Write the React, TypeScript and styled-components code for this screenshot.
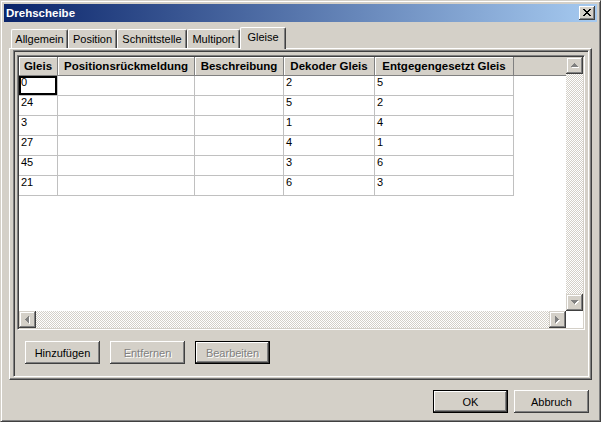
import styled, { createGlobalStyle } from "styled-components";

const GlobalStyle = createGlobalStyle`
  html, body {
    margin: 0;
    padding: 0;
    background: #d4d0c8;
  }
  body {
    font-family: "Liberation Sans", Arial, sans-serif;
    font-size: 11px;
    color: #000;
  }
  * {
    box-sizing: border-box;
  }
`;

const Window = styled.div`
  width: 601px;
  height: 422px;
  display: flex;
  flex-direction: column;
  padding: 3px;
  background: #d4d0c8;
  border: 1px solid;
  border-color: #d4d0c8 #404040 #404040 #d4d0c8;
  box-shadow: inset 1px 1px #fff, inset -1px -1px #808080;
`;

const TitleBar = styled.div`
  height: 18px;
  flex-shrink: 0;
  display: flex;
  align-items: center;
  justify-content: space-between;
  padding: 0 2px;
  background: linear-gradient(to right, #0a246a, #a6caf0);
  color: #fff;
  font-weight: bold;
  font-size: 11.5px;
`;

const CloseButton = styled.div`
  width: 16px;
  height: 14px;
  display: flex;
  align-items: center;
  justify-content: center;
  padding: 0 1px 1px 0;
  background: #d4d0c8;
  box-shadow: inset -1px -1px #404040, inset 1px 1px #fff,
    inset -2px -2px #808080, inset 2px 2px #d4d0c8;
`;

const Body = styled.div`
  flex: 1;
  display: flex;
  flex-direction: column;
  padding: 5px;
`;

const TabStrip = styled.div`
  height: 21px;
  display: flex;
  align-items: flex-end;
  padding-left: 2px;
  position: relative;
  z-index: 1;
`;

const Tab = styled.div<{ $w: number; $active?: boolean }>`
  width: ${(p) => p.$w}px;
  height: ${(p) => (p.$active ? 22 : 19)}px;
  margin-bottom: ${(p) => (p.$active ? -1 : 0)}px;
  padding-top: ${(p) => (p.$active ? 1 : 0)}px;
  line-height: ${(p) => (p.$active ? 16 : 18)}px;
  text-align: center;
  white-space: nowrap;
  background: #d4d0c8;
  border-top: 1px solid #fff;
  border-left: 1px solid #fff;
  border-right: 1px solid #404040;
  border-radius: 2px 2px 0 0;
  box-shadow: inset -1px 0 #808080;
`;

const Sheet = styled.div`
  height: 332px;
  flex-shrink: 0;
  display: flex;
  padding: 1px 2px 2px 3px;
  border: 1px solid;
  border-color: #fff #404040 #404040 #fff;
  box-shadow: inset -1px -1px #808080;
`;

const Frame = styled.div`
  flex: 1;
  display: flex;
  flex-direction: column;
  padding: 4px 3px 0 3px;
  border: 1px solid;
  border-color: #808080 #fff #fff #808080;
  box-shadow: inset 1px 1px #404040;
`;

const GridBox = styled.div`
  height: 275px;
  padding: 1px;
  border: 1px solid;
  border-color: #808080 #fff #fff #808080;
  box-shadow: inset 1px 1px #404040, inset -1px -1px #d4d0c8;
`;

const GridInner = styled.div`
  height: 100%;
  display: grid;
  grid-template-columns: 1fr 17px;
  grid-template-rows: 1fr 17px;
  background: #fff;
`;

const TableArea = styled.div`
  overflow: hidden;
  background: #fff;
`;

const HeaderRow = styled.div`
  display: flex;
  height: 19px;
`;

const HeaderCell = styled.div<{ $w: number }>`
  width: ${(p) => p.$w}px;
  flex-shrink: 0;
  line-height: 18px;
  font-weight: bold;
  font-size: 11.5px;
  text-align: center;
  white-space: nowrap;
  overflow: hidden;
  background: #d4d0c8;
  border-right: 1px solid #808080;
  border-bottom: 1px solid #808080;
  box-shadow: inset 1px 1px #fff;
`;

const HeaderFill = styled.div`
  flex: 1;
  background: #d4d0c8;
  border-bottom: 1px solid #808080;
`;

const DataRow = styled.div`
  display: flex;
  height: 20px;
`;

const Cell = styled.div<{ $w: number; $focus?: boolean }>`
  width: ${(p) => p.$w}px;
  flex-shrink: 0;
  padding: 0 2px;
  line-height: 12px;
  white-space: nowrap;
  border-right: 1px solid #c0c0c0;
  border-bottom: 1px solid #c0c0c0;
  box-shadow: ${(p) => (p.$focus ? "inset 0 0 0 2px #000" : "none")};
`;

const ScrollBar = styled.div<{ $vertical?: boolean }>`
  display: flex;
  flex-direction: ${(p) => (p.$vertical ? "column" : "row")};
`;

const Track = styled.div`
  flex: 1;
  background-color: #fff;
  background-image: conic-gradient(
    #d4d0c8 25%,
    transparent 0 50%,
    #d4d0c8 0 75%,
    transparent 0
  );
  background-size: 2px 2px;
`;

const ArrowButton = styled.div`
  width: 17px;
  height: 17px;
  flex-shrink: 0;
  display: flex;
  align-items: center;
  justify-content: center;
  background: #d4d0c8;
  box-shadow: inset -1px -1px #404040, inset 1px 1px #d4d0c8,
    inset -2px -2px #808080, inset 2px 2px #fff;
`;

const Corner = styled.div`
  background: #fff;
`;

const ButtonRow = styled.div`
  display: flex;
  gap: 10px;
  margin-top: 11px;
  padding-left: 8px;
`;

const Footer = styled.div`
  display: flex;
  justify-content: flex-end;
  gap: 6px;
  margin-top: 10px;
  padding-right: 3px;
`;

const Button = styled.button<{ $default?: boolean }>`
  width: 75px;
  height: 23px;
  padding: 0;
  font-family: "Liberation Sans", Arial, sans-serif;
  font-size: 11px;
  color: #000;
  background: #d4d0c8;
  border: ${(p) => (p.$default ? "1px solid #000" : "none")};
  box-shadow: ${(p) =>
    p.$default
      ? "inset -1px -1px #404040, inset 1px 1px #fff, inset -2px -2px #808080"
      : "inset -1px -1px #404040, inset 1px 1px #fff, inset -2px -2px #808080, inset 2px 2px #d4d0c8"};

  &:disabled {
    color: #808080;
    text-shadow: 1px 1px #fff;
  }
`;

const arrowPaths = {
  up: { w: 7, h: 4, d: "M3 0h1v1H3zM2 1h3v1H2zM1 2h5v1H1zM0 3h7v1H0z" },
  down: { w: 7, h: 4, d: "M0 0h7v1H0zM1 1h5v1H1zM2 2h3v1H2zM3 3h1v1H3z" },
  left: { w: 4, h: 7, d: "M3 0h1v7H3zM2 1h1v5H2zM1 2h1v3H1zM0 3h1v1H0z" },
  right: { w: 4, h: 7, d: "M0 0h1v7H0zM1 1h1v5H1zM2 2h1v3H2zM3 3h1v1H3z" },
};

const Arrow = ({ dir }: { dir: keyof typeof arrowPaths }) => {
  const a = arrowPaths[dir];
  return (
    <svg
      width={a.w + 1}
      height={a.h + 1}
      viewBox={`0 0 ${a.w + 1} ${a.h + 1}`}
      shapeRendering="crispEdges"
    >
      <path d={a.d} fill="#fff" transform="translate(1 1)" />
      <path d={a.d} fill="#808080" />
    </svg>
  );
};

const CloseGlyph = () => (
  <svg width="8" height="7" viewBox="0 0 8 7" shapeRendering="crispEdges">
    <path
      d="M0 0h2v1H0zM6 0h2v1H6zM1 1h2v1H1zM5 1h2v1H5zM2 2h4v1H2zM3 3h2v1H3zM2 4h4v1H2zM1 5h2v1H1zM5 5h2v1H5zM0 6h2v1H0zM6 6h2v1H6z"
      fill="#000"
    />
  </svg>
);

const tabs = [
  { label: "Allgemein", w: 57 },
  { label: "Position", w: 49 },
  { label: "Schnittstelle", w: 70 },
  { label: "Multiport", w: 53 },
  { label: "Gleise", w: 46, active: true },
];

const columns = [
  { title: "Gleis", w: 39 },
  { title: "Positionsrückmeldung", w: 137 },
  { title: "Beschreibung", w: 89 },
  { title: "Dekoder Gleis", w: 91 },
  { title: "Entgegengesetzt Gleis", w: 139 },
];

const rows = [
  ["0", "", "", "2", "5"],
  ["24", "", "", "5", "2"],
  ["3", "", "", "1", "4"],
  ["27", "", "", "4", "1"],
  ["45", "", "", "3", "6"],
  ["21", "", "", "6", "3"],
];

const App = () => {
  return (
    <>
      <GlobalStyle />
      <Window>
        <TitleBar>
          <span>Drehscheibe</span>
          <CloseButton>
            <CloseGlyph />
          </CloseButton>
        </TitleBar>
        <Body>
          <TabStrip>
            {tabs.map((t) => (
              <Tab key={t.label} $w={t.w} $active={t.active}>
                {t.label}
              </Tab>
            ))}
          </TabStrip>
          <Sheet>
            <Frame>
              <GridBox>
                <GridInner>
                  <TableArea>
                    <HeaderRow>
                      {columns.map((c) => (
                        <HeaderCell key={c.title} $w={c.w}>
                          {c.title}
                        </HeaderCell>
                      ))}
                      <HeaderFill />
                    </HeaderRow>
                    {rows.map((r, i) => (
                      <DataRow key={i}>
                        {r.map((v, j) => (
                          <Cell
                            key={j}
                            $w={columns[j].w}
                            $focus={i === 0 && j === 0}
                          >
                            {v}
                          </Cell>
                        ))}
                      </DataRow>
                    ))}
                  </TableArea>
                  <ScrollBar $vertical>
                    <ArrowButton>
                      <Arrow dir="up" />
                    </ArrowButton>
                    <Track />
                    <ArrowButton>
                      <Arrow dir="down" />
                    </ArrowButton>
                  </ScrollBar>
                  <ScrollBar>
                    <ArrowButton>
                      <Arrow dir="left" />
                    </ArrowButton>
                    <Track />
                    <ArrowButton>
                      <Arrow dir="right" />
                    </ArrowButton>
                  </ScrollBar>
                  <Corner />
                </GridInner>
              </GridBox>
              <ButtonRow>
                <Button>Hinzufügen</Button>
                <Button disabled>Entfernen</Button>
                <Button $default disabled>
                  Bearbeiten
                </Button>
              </ButtonRow>
            </Frame>
          </Sheet>
          <Footer>
            <Button $default>OK</Button>
            <Button>Abbruch</Button>
          </Footer>
        </Body>
      </Window>
    </>
  );
};

export default App;
